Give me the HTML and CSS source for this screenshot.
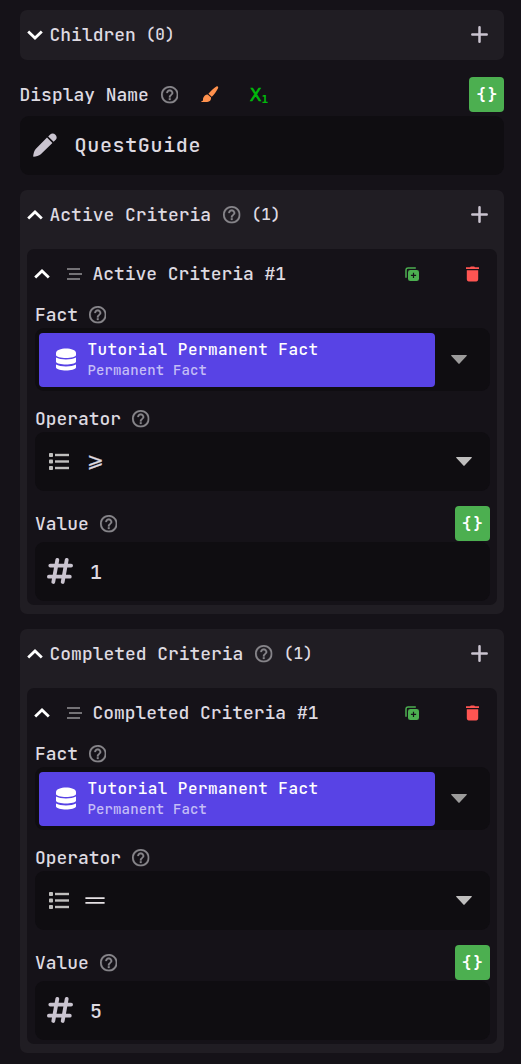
FILE: index.html
```html
<!DOCTYPE html>
<html lang="en">
<head>
<meta charset="utf-8">
<title>Quest Guide</title>
<link rel="stylesheet" href="styles.css">
</head>
<body>
<svg class="sprite" aria-hidden="true">
  <symbol id="down" viewBox="0 0 16 10"><path d="M1.200 1.400 8 8l6.800-6.600" fill="none" stroke="#fff" stroke-width="2.800"/></symbol>
  <symbol id="up" viewBox="0 0 16 10"><path d="M1.200 8.600 8 2l6.800 6.600" fill="none" stroke="#fff" stroke-width="2.800"/></symbol>
  <symbol id="plus" viewBox="0 0 17 17"><path d="M8.500 1.300v14.400M1.300 8.500h14.400" stroke="#cac4d0" stroke-width="2.500" stroke-linecap="round"/></symbol>
  <symbol id="help" viewBox="2 2 20 20"><path fill="#88868b" stroke="#88868b" stroke-width=".3" d="M11 18h2v-2h-2v2zm1-16C6.480 2 2 6.480 2 12s4.480 10 10 10 10-4.480 10-10S17.520 2 12 2zm0 18c-4.410 0-8-3.590-8-8s3.590-8 8-8 8 3.590 8 8-3.590 8-8 8zm0-14c-2.210 0-4 1.790-4 4h2c0-1.100.9-2 2-2s2 .9 2 2c0 2-3 1.750-3 5h2c0-2.250 3-2.500 3-5 0-2.210-1.790-4-4-4z"/></symbol>
  <symbol id="brush" viewBox="0 0 18 17"><path fill="#ff914d" d="M16.700.4c.7.6.6 1.400.2 2.100-1.700 3-3.600 6-6.100 8.300L7.400 7.700C9.800 5 12.500 2.500 15.400.5c.5-.3.9-.4 1.300-.1zM6.700 8.400l3.400 3.200c.1 2.500-1.300 4.400-3.900 4.500H.5c-.4-.5 0-.9.6-1 1.500-.3.6-1.700 1.100-3.200.7-2 2.200-3.300 4.500-3.500z"/></symbol>
  <symbol id="pencil" viewBox="0 0 24 24"><path fill="#cac4d0" d="M14 4.600 19.400 10 7.800 21.300C6 23 2.800 23.400.8 23.700.3 23.800.1 23.500.2 23 .5 20.800 1.100 17.500 2.700 15.900zM15.200 3.400l2-2c3.300-3.200 8.700 2.100 5.500 5.400l-2.100 2z"/></symbol>
  <symbol id="copy" viewBox="0 0 14 14"><path fill="none" stroke="#4caf50" stroke-width="1.500" d="M1 10.800V3.200C1 1.700 1.700 1 3.200 1h7.600"/><rect x="3" y="3" width="11" height="11" rx="2.300" fill="#4caf50"/><path d="M8.500 5.700v5.200M5.900 8.300h5.200" stroke="#151218" stroke-width="1.200"/></symbol>
  <symbol id="trash" viewBox="0 0 13 16"><path fill="#ff5552" d="M0 1.200h4L4.800.4h3.400L9 1.200h4V3H0zM.8 4.200h11.400v8.900c0 1.500-.7 2.300-2 2.300H2.800c-1.300 0-2-.8-2-2.300z"/></symbol>
  <symbol id="lines" viewBox="0 0 15 12"><path stroke="#949295" stroke-width="1.700" d="M0 1h13M2 6h13M0 11h13"/></symbol>
  <symbol id="db" viewBox="0 0 20 23"><g fill="#fff"><path d="M0 5C0-1 20-1 20 5v2C20 11 0 11 0 7z"/><path d="M0 9.600c4 2.500 16 2.500 20 0v4.200c-1 3.600-19 3.600-20 0z"/><path d="M0 16.500c4 2.500 16 2.500 20 0v3c-1 4-19 4-20 0z"/></g></symbol>
  <symbol id="caret" viewBox="0 0 16 9"><path fill="currentColor" d="M.8 0h14.400c.7 0 .8.5.4.9L8.600 8.500c-.4.5-.8.5-1.200 0L.4.9C0 .5.100 0 .8 0z"/></symbol>
  <symbol id="list" viewBox="0 0 20 17"><g fill="#c0bfbe"><rect width="4" height="4" rx=".8"/><rect y="6.500" width="4" height="4" rx=".8"/><rect y="13" width="4" height="4" rx=".8"/><rect x="6" y=".8" width="14" height="2.400"/><rect x="6" y="7.300" width="14" height="2.400"/><rect x="6" y="13.800" width="14" height="2.400"/></g></symbol>
  <symbol id="hash" viewBox="0 0 26 26"><path fill="none" stroke="#cac4d0" stroke-width="3.800" stroke-linecap="round" d="M10.300 1.900 6.300 24M19.700 1.900l-4 22.100M3.300 7.600h20.800M1.900 18.700h20.900"/></symbol>
  <symbol id="equal" viewBox="0 0 20 7"><path stroke="#e6e1e5" stroke-width="1.700" d="M.4 1.200h19.200M.4 5.800h19.200"/></symbol>
</svg>

<main class="inspector">
  <section class="panel">
    <header class="panel-head"><svg class="chevron"><use href="#down"/></svg><span>Children</span><small class="count first">(0)</small><svg class="plus"><use href="#plus"/></svg></header>
  </section>

  <div class="label name-label"><span>Display Name</span><svg class="help"><use href="#help"/></svg><svg class="brush"><use href="#brush"/></svg><span class="variable">X<sub>1</sub></span><b class="braces"><span>{</span><span>}</span></b></div>
  <div class="field name-field"><svg class="pencil"><use href="#pencil"/></svg><span class="value">QuestGuide</span></div>

  <section class="panel">
    <header class="panel-head"><svg class="chevron"><use href="#up"/></svg><span>Active Criteria</span><svg class="help"><use href="#help"/></svg><small class="count">(1)</small><svg class="plus"><use href="#plus"/></svg></header>
    <article class="item">
      <header class="item-head"><svg class="chevron"><use href="#up"/></svg><svg class="lines"><use href="#lines"/></svg><span>Active Criteria #1</span><svg class="copy"><use href="#copy"/></svg><svg class="trash"><use href="#trash"/></svg></header>
      <div class="label fact-label"><span>Fact</span><svg class="help"><use href="#help"/></svg></div>
      <div class="field fact-field"><div class="chip"><svg class="db"><use href="#db"/></svg><div class="chip-text"><span class="chip-title">Tutorial Permanent Fact</span><span class="chip-kind">Permanent Fact</span></div></div><svg class="caret dim"><use href="#caret"/></svg></div>
      <div class="label operator-label"><span>Operator</span><svg class="help"><use href="#help"/></svg></div>
      <div class="field"><svg class="list"><use href="#list"/></svg><span class="value operator">⩾</span><svg class="caret"><use href="#caret"/></svg></div>
      <div class="label value-label"><span>Value</span><svg class="help"><use href="#help"/></svg><b class="braces"><span>{</span><span>}</span></b></div>
      <div class="field"><svg class="hash"><use href="#hash"/></svg><span class="value">1</span></div>
    </article>
  </section>

  <section class="panel">
    <header class="panel-head"><svg class="chevron"><use href="#up"/></svg><span>Completed Criteria</span><svg class="help"><use href="#help"/></svg><small class="count">(1)</small><svg class="plus"><use href="#plus"/></svg></header>
    <article class="item">
      <header class="item-head"><svg class="chevron"><use href="#up"/></svg><svg class="lines"><use href="#lines"/></svg><span>Completed Criteria #1</span><svg class="copy"><use href="#copy"/></svg><svg class="trash"><use href="#trash"/></svg></header>
      <div class="label fact-label"><span>Fact</span><svg class="help"><use href="#help"/></svg></div>
      <div class="field fact-field"><div class="chip"><svg class="db"><use href="#db"/></svg><div class="chip-text"><span class="chip-title">Tutorial Permanent Fact</span><span class="chip-kind">Permanent Fact</span></div></div><svg class="caret dim"><use href="#caret"/></svg></div>
      <div class="label operator-label"><span>Operator</span><svg class="help"><use href="#help"/></svg></div>
      <div class="field"><svg class="list"><use href="#list"/></svg><svg class="equal" role="img" aria-label="equals"><use href="#equal"/></svg><svg class="caret"><use href="#caret"/></svg></div>
      <div class="label value-label"><span>Value</span><svg class="help"><use href="#help"/></svg><b class="braces"><span>{</span><span>}</span></b></div>
      <div class="field"><svg class="hash"><use href="#hash"/></svg><span class="value">5</span></div>
    </article>
  </section>
</main>
</body>
</html>
```
FILE: styles.css
```css
* { box-sizing: border-box; }
html { background: #151218; }
body {
  margin: 0;
  color: #dedae1;
  font: 500 17.950px/24px "JetBrains Mono", "DejaVu Sans Mono", monospace;
  font-variant-ligatures: none;
}
svg { display: block; flex: none; }
.sprite { width: 0; height: 0; position: absolute; }
.inspector { padding: 10px 16.600px 11px 19.600px; }
.panel { background: #201d23; border-radius: 7px; }
.panel + .panel { margin-top: 15.500px; }
.panel-head { height: 50px; padding: 0 16.500px 0 7px; display: flex; align-items: center; white-space: nowrap; }
.chevron { width: 16px; height: 10px; margin-right: 7px; }
.plus { width: 17px; height: 17px; margin: 0 0 1px auto; }
.help { width: 17.500px; height: 17.500px; margin-left: 11.500px; }
.panel-head .help, .name-label .help { margin-left: 12px; }
.count { font-size: 16px; margin-left: 11px; }
.count.first { margin-left: 10px; }
.label { display: flex; align-items: center; white-space: nowrap; }
.fact-label .help, .operator-label .help, .value-label .help { margin-left: 11px; }
.name-label { height: 35.500px; margin: 17px 0 3px; }
.brush { width: 18px; height: 17px; margin-left: 22.500px; }
.variable { color: #00b90b; margin-left: 31px; font: 17px/24px "DejaVu Sans", sans-serif; -webkit-text-stroke: .6px #00b90b; display: flex; align-items: center; }
.variable sub { font: bold 11px/12px "DejaVu Sans Mono", monospace; -webkit-text-stroke: 0; margin: 10px 0 0; }
.braces {
  width: 35.300px; height: 35px; margin-left: auto;
  display: flex; align-items: center; justify-content: center; gap: 2px;
  border-radius: 4px; background: #4caf50; color: #fff;
  font-size: 16px; line-height: 20px; padding-top: 1px;
}
.field { height: 59px; border-radius: 9px; background: #0f0d11; display: flex; align-items: center; }
.name-field { margin-bottom: 15.500px; }
.pencil { width: 24px; height: 24px; margin: 0 0 1px 13px; }
.value { font-size: 20px; letter-spacing: .65px; margin-left: 18px; }
.item { margin: 9px 7.500px 0 7.300px; padding: 0 7px 4px 8px; border-radius: 7px; background: #151218; }
.panel:has(.item) { padding-bottom: 9px; }
.item-head { height: 49px; display: flex; align-items: center; padding-right: 11px; margin-left: -1px; white-space: nowrap; }
.lines { width: 15px; height: 12px; margin: 0 10.500px 0 10px; }
.copy { width: 14px; height: 14px; margin-left: auto; }
.trash { width: 13px; height: 16px; margin-left: 46.500px; }
.fact-label { height: 30px; padding-top: 4px; }
.fact-field { height: 63px; padding-left: 4.500px; }
.chip { width: 395.300px; height: 54px; border-radius: 4px; background: #5843e5; display: flex; align-items: center; padding-left: 16.500px; }
.db { width: 20px; height: 23px; margin-right: 11.500px; }
.chip-text { display: flex; flex-direction: column; line-height: 21.500px; white-space: nowrap; padding-top: 1.500px; }
.chip-title { color: #fff; font-size: 16px; letter-spacing: .45px; }
.chip-kind { color: #c4bdf6; font-size: 14px; letter-spacing: .15px; }
.caret { width: 16px; height: 9px; margin-left: auto; margin-right: 17.500px; color: #bfbebe; }
.caret.dim { color: #9c9b9b; margin-right: 22.500px; }
.operator-label { height: 40.500px; padding-top: 15px; }
.value-label { height: 51px; padding-top: 15.500px; }
.list { width: 20px; height: 17px; margin: 0 0 0 14.500px; }
.operator { margin: 0 0 2px 18px; -webkit-text-stroke: .3px #dedae1; }
.hash { width: 26px; height: 26px; margin-left: 12px; }
.equal { width: 20px; height: 7px; margin-left: 15.500px; }
.hash + .value { margin-left: 17px; padding-top: 1px; }
```
